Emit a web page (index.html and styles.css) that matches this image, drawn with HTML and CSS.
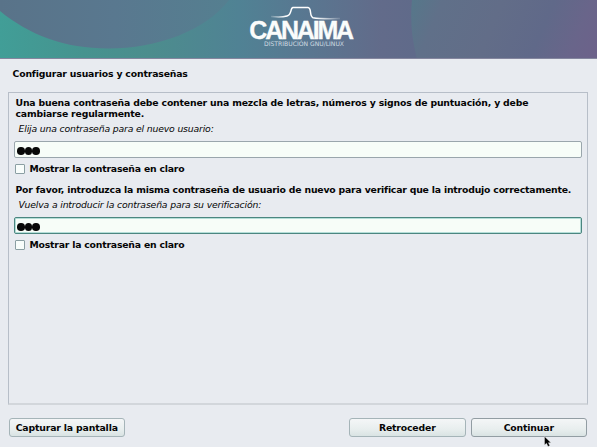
FILE: index.html
```html
<!DOCTYPE html>
<html lang="es">
<head>
<meta charset="utf-8">
<title>Configurar usuarios y contraseñas</title>
<link rel="stylesheet" href="styles.css">
</head>
<body>
<header class="banner">
<svg class="banner-art" viewBox="0 0 597 59" preserveAspectRatio="none">
<defs>
<linearGradient id="base"><stop offset="0" stop-color="#419e97"/><stop offset=".14" stop-color="#46938f"/><stop offset=".25" stop-color="#4c8d8d"/><stop offset=".4" stop-color="#508294"/><stop offset=".5" stop-color="#587891"/><stop offset=".64" stop-color="#626b8a"/><stop offset=".72" stop-color="#5f6a8a"/><stop offset="1" stop-color="#66648a"/></linearGradient>
<linearGradient id="arc"><stop offset="0" stop-color="#597389"/><stop offset=".5" stop-color="#59788f"/><stop offset="1" stop-color="#557f90"/></linearGradient>
<linearGradient id="right" gradientUnits="userSpaceOnUse" x1="410" y1="0" x2="585" y2="75"><stop offset="0" stop-color="#55788a"/><stop offset=".16" stop-color="#607089"/><stop offset=".45" stop-color="#626d88"/><stop offset=".7" stop-color="#606989"/><stop offset=".88" stop-color="#69658a"/><stop offset="1" stop-color="#6c628a"/></linearGradient>
</defs>
<path fill="url(#base)" d="M0 0H597V59H0z"/>
<path fill="url(#arc)" d="M0 0V11C29 35 65 48.500 108 48.500C157 48.500 205 31 229 0z"/>
<path fill="url(#right)" d="M412 0Q409 29 417 59H597V0z"/>
<path fill="#84869e" d="M0 58H597V59H0z"/>
</svg>
<svg class="logo" viewBox="0 0 120 50">
<defs><linearGradient id="ridge" gradientUnits="userSpaceOnUse" x1="30" y1="0" x2="101" y2="0"><stop offset="0" stop-color="#fff" stop-opacity=".1"/><stop offset=".22" stop-color="#fff"/><stop offset=".65" stop-color="#fff"/><stop offset="1" stop-color="#fff" stop-opacity=".1"/></linearGradient></defs>
<path fill="none" stroke="url(#ridge)" stroke-width="1.500" d="M31 16.500Q41 17.500 47 16C52 15 50 8 53 7.600H68C72 8 69 16 73 17.700Q80 19 100 18.500"/>
<text class="logo-name" x="9.300" y="39">CANAIMA</text>
<text class="logo-sub" x="24" y="45.500" textLength="80" lengthAdjust="spacingAndGlyphs">DISTRIBUCIÓN GNU/LINUX</text>
</svg>
</header>
<main class="installer">
<h1 class="title">Configurar usuarios y contraseñas</h1>
<section class="panel">
<p class="message">Una buena contraseña debe contener una mezcla de letras, números y signos de puntuación, y debe<br>cambiarse regularmente.</p>
<p class="label">Elija una contraseña para el nuevo usuario:</p>
<div class="entry"><i></i><i></i><i></i></div>
<div class="check"><span class="box"></span>Mostrar la contraseña en claro</div>
<p class="message second">Por favor, introduzca la misma contraseña de usuario de nuevo para verificar que la introdujo correctamente.</p>
<p class="label">Vuelva a introducir la contraseña para su verificación:</p>
<div class="entry focused"><i></i><i></i><i></i></div>
<div class="check"><span class="box"></span>Mostrar la contraseña en claro</div>
</section>
<footer class="actions">
<button class="capture">Capturar la pantalla</button>
<button>Retroceder</button>
<button class="active">Continuar</button>
</footer>
</main>
<svg class="cursor" viewBox="0 0 8 12"><path d="M.5.500V9L2.500 7.300 4 10.500 5.800 9.700 4.400 6.700H7z" stroke="#eee" stroke-width=".4"/></svg>
</body>
</html>
```
FILE: styles.css
```css
* { box-sizing: border-box; }
body { margin: 0; width: 597px; height: 447px; overflow: hidden; background: #e8ebf0; color: #050505; font: bold 9.3px/11px "DejaVu Sans", sans-serif; white-space: nowrap; position: relative; }
.banner { height: 59px; display: flex; justify-content: center; position: relative; }
.banner-art { position: absolute; inset: 0; width: 597px; height: 59px; }
.logo { position: relative; width: 120px; height: 50px; margin-left: 3px; }
.logo-name { font: bold 25px "Liberation Sans", sans-serif; letter-spacing: -2.2px; fill: #fafcfb; stroke: #fafcfb; stroke-width: .3px; }
.logo-sub { font: 6.2px "DejaVu Sans", sans-serif; fill: #d0dce2; }
.installer { padding: 9px 10px 0 8px; }
.title { font: inherit; margin: 0 0 13px 4.5px; line-height: 11px; letter-spacing: -.155px; }
.panel { height: 313px; margin-right: -1px; border: 1px solid #b7bec8; border-bottom: 2px solid #d2d6db; padding: 4px 5px 0; }
.message { margin: 0 0 0 1.5px; line-height: 11px; letter-spacing: -.165px; }
.second { margin-top: 10px; letter-spacing: -.19px; }
.label { margin: 4px 0 0 4.5px; font-weight: normal; font-style: italic; letter-spacing: -.165px; }
.entry { height: 17px; margin-top: 7px; padding: 3px 0 0 2px; border: 1px solid #9aa6ac; border-radius: 2px; background: #f7fdf8; display: flex; align-items: center; }
.focused { border-color: #4b8680; box-shadow: inset 0 0 0 1px #b4ded8; }
.entry i { width: 7.6px; height: 7.6px; border-radius: 50%; background: #080808; }
.check { display: flex; align-items: center; height: 11px; margin-top: 5px; gap: 4.5px; padding-left: 1px; letter-spacing: -.2px; }
.box { width: 10px; height: 10px; border: 1px solid #8b9fa3; background: #f8fdfb; border-radius: 1px; }
.actions { display: flex; gap: 5px; margin: 13px 0 0 .5px; }
button { width: 116.5px; height: 19px; padding: 0; border: 1px solid #a5b4b8; border-radius: 3px; background: linear-gradient(#f4f6f7, #e8eeee 60%, #d9e3e3); color: inherit; font: inherit; letter-spacing: -.15px; }
.capture { margin-right: auto; }
.active { border-color: #929da3; }
.cursor { position: absolute; left: 544px; top: 436px; width: 8px; height: 12px; }
```
